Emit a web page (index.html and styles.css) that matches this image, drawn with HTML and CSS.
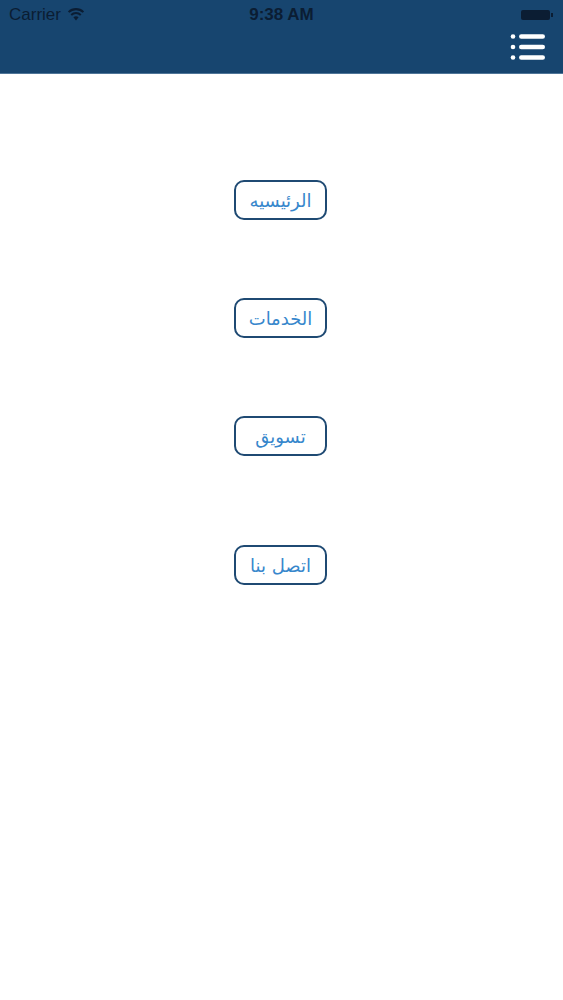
FILE: index.html
```html
<!DOCTYPE html>
<html lang="ar">
<head>
    <meta charset="UTF-8">
    <meta name="viewport" content="width=device-width, initial-scale=1.0">
    <title>القائمة</title>
    <link rel="stylesheet" href="styles.css">
</head>
<body>
    <header class="topbar">
        <div class="status">
            <div class="status-left">
                <span>Carrier</span>
                <svg class="wifi" width="18" height="13" viewBox="0 0 16 12">
                    <path d="M8 11.5 L5.6 8.6 A3.6 3.6 0 0 1 10.4 8.6 Z" fill="#0b1d33"/>
                    <path d="M3.6 6.4 A6.4 6.4 0 0 1 12.4 6.4" stroke="#0b1d33" stroke-width="1.9" fill="none"/>
                    <path d="M1.2 3.8 A9.8 9.8 0 0 1 14.8 3.8" stroke="#0b1d33" stroke-width="1.9" fill="none"/>
                </svg>
            </div>
            <div class="status-time">9:38 AM</div>
            <div class="status-right">
                <span class="battery"></span><span class="battery-tip"></span>
            </div>
        </div>
        <div class="navrow">
            <svg class="menu-icon" width="36" height="28" viewBox="0 0 36 28">
                <circle cx="3" cy="3.5" r="2.3" fill="#fff"/>
                <circle cx="3" cy="14" r="2.3" fill="#fff"/>
                <circle cx="3" cy="24.5" r="2.3" fill="#fff"/>
                <rect x="9" y="1.2" width="26" height="4.6" rx="2.3" fill="#fff"/>
                <rect x="9" y="11.7" width="26" height="4.6" rx="2.3" fill="#fff"/>
                <rect x="9" y="22.2" width="26" height="4.6" rx="2.3" fill="#fff"/>
            </svg>
        </div>
    </header>

    <nav class="menu">
        <a class="menu-btn" href="#">الرئيسيه</a>
        <a class="menu-btn" href="#">الخدمات</a>
        <a class="menu-btn" href="#">تسويق</a>
        <a class="menu-btn" href="#">اتصل بنا</a>
    </nav>
</body>
</html>
```

FILE: styles.css
```css
body {
    margin: 0;
    background-color: #fff;
    font-family: "DejaVu Sans", "Noto Sans", sans-serif;
}
.topbar {
    background-color: #17456f;
    height: 74px;
    border-bottom: 1px solid #4f7598;
    box-sizing: border-box;
}
.status {
    display: flex;
    align-items: center;
    justify-content: space-between;
    height: 29px;
    padding: 0 9px;
    font-family: "Liberation Sans", Arial, sans-serif;
    font-size: 17px;
    color: #0b1d33;
    position: relative;
}
.status-left {
    display: flex;
    align-items: center;
    gap: 6px;
}
.status-time {
    position: absolute;
    left: 0;
    right: 0;
    text-align: center;
    font-weight: bold;
}
.status-right {
    display: flex;
    align-items: center;
    margin-right: 1px;
}
.battery {
    width: 29px;
    height: 10px;
    background-color: #0b1d33;
    border-radius: 2px;
}
.battery-tip {
    width: 2px;
    height: 4px;
    background-color: #0b1d33;
    margin-left: 1px;
}
.navrow {
    display: flex;
    justify-content: flex-end;
    padding: 4px 17px 0 0;
}
.menu {
    display: flex;
    flex-direction: column;
    align-items: center;
    padding-top: 106px;
}
.menu-btn {
    display: flex;
    align-items: center;
    justify-content: center;
    width: 93px;
    height: 40px;
    box-sizing: border-box;
    border: 2px solid #1f4a73;
    border-radius: 10px;
    color: #3787cc;
    font-size: 18px;
    text-decoration: none;
    margin-bottom: 78px;
    margin-left: -2px;
}
.menu-btn:nth-child(3) {
    margin-bottom: 89px;
}
```
